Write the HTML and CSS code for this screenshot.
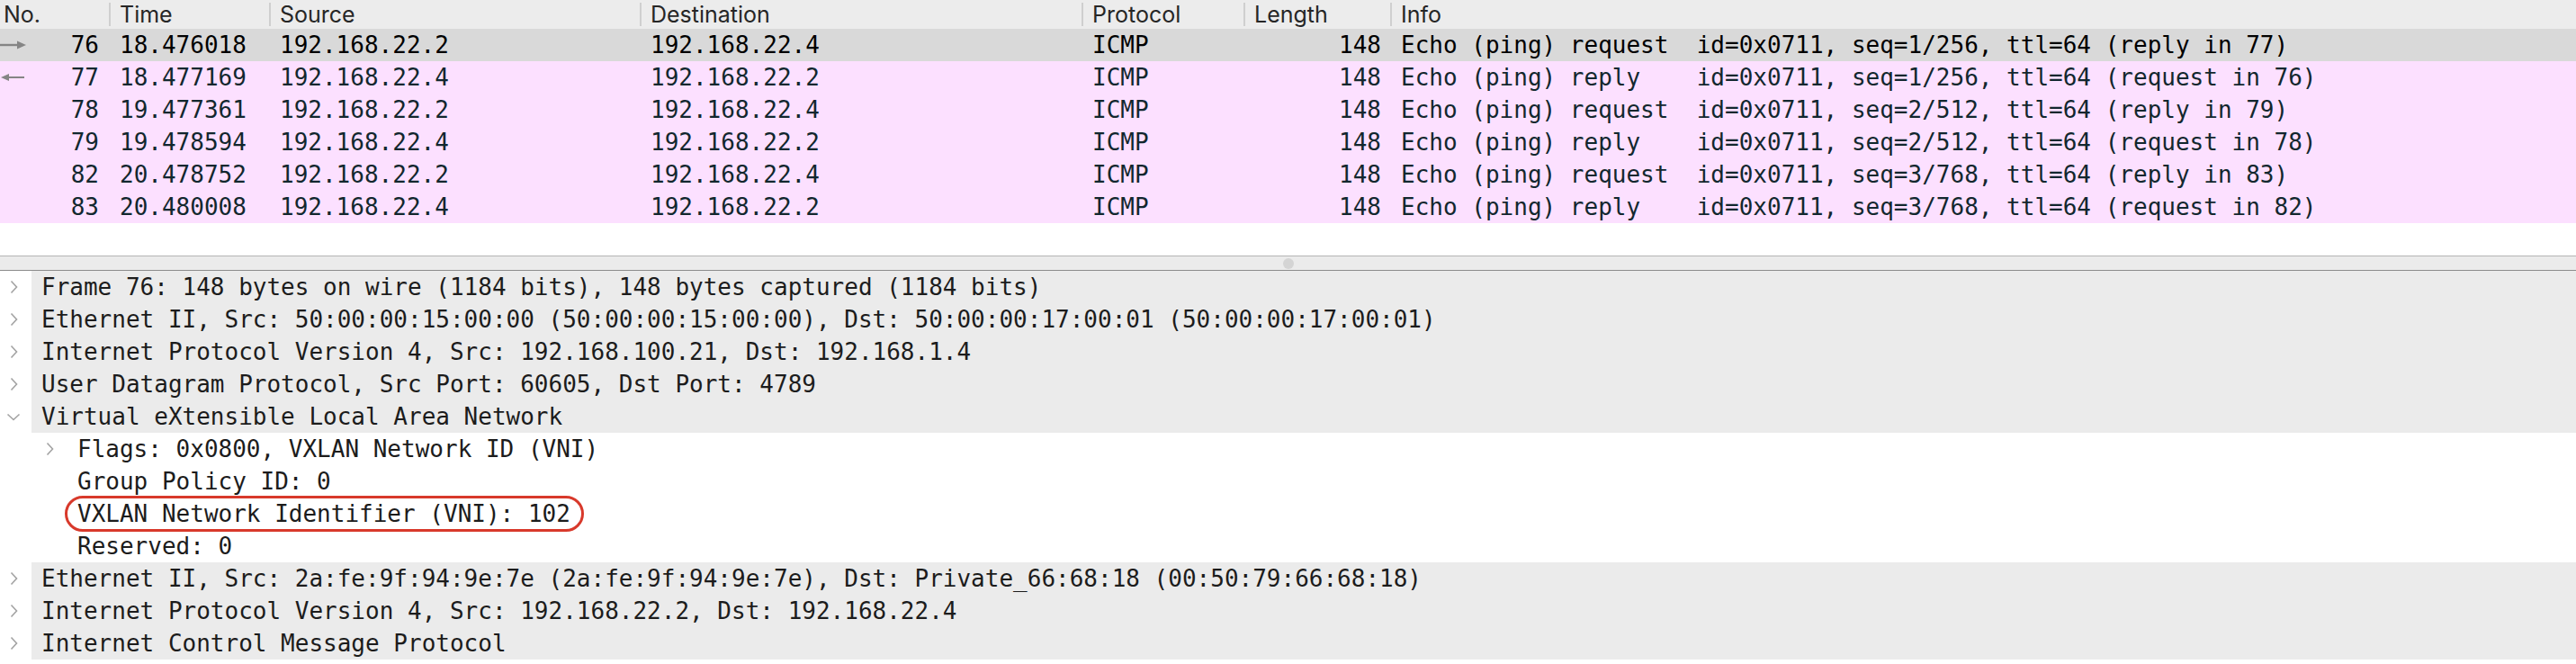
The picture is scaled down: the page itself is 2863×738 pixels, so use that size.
FILE: index.html
```html
<!DOCTYPE html>
<html>
<head>
<meta charset="utf-8">
<link rel="stylesheet" href="styles.css">
</head>
<body>
<div class="app">
  <div class="plist">
    <div class="phead">
      <div class="h">No.</div>
      <div class="h sep">Time</div>
      <div class="h sep">Source</div>
      <div class="h sep">Destination</div>
      <div class="h sep">Protocol</div>
      <div class="h sep">Length</div>
      <div class="h sep">Info</div>
    </div>
    <div class="prow sel">
      <div class="c no"><svg class="rel" width="30" height="14" viewBox="0 0 30 14"><line x1="0" y1="7" x2="20" y2="7" stroke="#858585" stroke-width="2.4"/><polygon points="19,2.5 29,7 19,11.5" fill="#858585"/></svg><span>76</span></div>
      <div class="c">18.476018</div><div class="c">192.168.22.2</div><div class="c">192.168.22.4</div><div class="c">ICMP</div><div class="c num">148</div>
      <div class="c">Echo (ping) request  id=0x0711, seq=1/256, ttl=64 (reply in 77)</div>
    </div>
    <div class="prow icmp">
      <div class="c no"><svg class="rel" width="30" height="14" viewBox="0 0 30 14"><line x1="7" y1="7" x2="27" y2="7" stroke="#858585" stroke-width="2"/><polygon points="1,7 10,3 10,11" fill="#858585"/></svg><span>77</span></div>
      <div class="c">18.477169</div><div class="c">192.168.22.4</div><div class="c">192.168.22.2</div><div class="c">ICMP</div><div class="c num">148</div>
      <div class="c">Echo (ping) reply    id=0x0711, seq=1/256, ttl=64 (request in 76)</div>
    </div>
    <div class="prow icmp">
      <div class="c no"><span>78</span></div>
      <div class="c">19.477361</div><div class="c">192.168.22.2</div><div class="c">192.168.22.4</div><div class="c">ICMP</div><div class="c num">148</div>
      <div class="c">Echo (ping) request  id=0x0711, seq=2/512, ttl=64 (reply in 79)</div>
    </div>
    <div class="prow icmp">
      <div class="c no"><span>79</span></div>
      <div class="c">19.478594</div><div class="c">192.168.22.4</div><div class="c">192.168.22.2</div><div class="c">ICMP</div><div class="c num">148</div>
      <div class="c">Echo (ping) reply    id=0x0711, seq=2/512, ttl=64 (request in 78)</div>
    </div>
    <div class="prow icmp">
      <div class="c no"><span>82</span></div>
      <div class="c">20.478752</div><div class="c">192.168.22.2</div><div class="c">192.168.22.4</div><div class="c">ICMP</div><div class="c num">148</div>
      <div class="c">Echo (ping) request  id=0x0711, seq=3/768, ttl=64 (reply in 83)</div>
    </div>
    <div class="prow icmp">
      <div class="c no"><span>83</span></div>
      <div class="c">20.480008</div><div class="c">192.168.22.4</div><div class="c">192.168.22.2</div><div class="c">ICMP</div><div class="c num">148</div>
      <div class="c">Echo (ping) reply    id=0x0711, seq=3/768, ttl=64 (request in 82)</div>
    </div>
  </div>

  <div class="splitter"><span class="grip"></span></div>

  <div class="tree">
    <div class="trow top"><span class="tw"><svg width="9" height="16" viewBox="0 0 9 16"><polyline points="1.5,1.5 7.5,8 1.5,14.5" fill="none" stroke="#a3a3a3" stroke-width="1.6"/></svg></span><span class="tt">Frame 76: 148 bytes on wire (1184 bits), 148 bytes captured (1184 bits)</span></div>
    <div class="trow top"><span class="tw"><svg width="9" height="16" viewBox="0 0 9 16"><polyline points="1.5,1.5 7.5,8 1.5,14.5" fill="none" stroke="#a3a3a3" stroke-width="1.6"/></svg></span><span class="tt">Ethernet II, Src: 50:00:00:15:00:00 (50:00:00:15:00:00), Dst: 50:00:00:17:00:01 (50:00:00:17:00:01)</span></div>
    <div class="trow top"><span class="tw"><svg width="9" height="16" viewBox="0 0 9 16"><polyline points="1.5,1.5 7.5,8 1.5,14.5" fill="none" stroke="#a3a3a3" stroke-width="1.6"/></svg></span><span class="tt">Internet Protocol Version 4, Src: 192.168.100.21, Dst: 192.168.1.4</span></div>
    <div class="trow top"><span class="tw"><svg width="9" height="16" viewBox="0 0 9 16"><polyline points="1.5,1.5 7.5,8 1.5,14.5" fill="none" stroke="#a3a3a3" stroke-width="1.6"/></svg></span><span class="tt">User Datagram Protocol, Src Port: 60605, Dst Port: 4789</span></div>
    <div class="trow top"><span class="tw"><svg width="16" height="9" viewBox="0 0 16 9"><polyline points="1.5,1.5 8,7.5 14.5,1.5" fill="none" stroke="#a3a3a3" stroke-width="1.6"/></svg></span><span class="tt">Virtual eXtensible Local Area Network</span></div>
    <div class="trow child"><span class="tw"><svg width="9" height="16" viewBox="0 0 9 16"><polyline points="1.5,1.5 7.5,8 1.5,14.5" fill="none" stroke="#a3a3a3" stroke-width="1.6"/></svg></span><span class="tt">Flags: 0x0800, VXLAN Network ID (VNI)</span></div>
    <div class="trow child"><span class="tw"></span><span class="tt">Group Policy ID: 0</span></div>
    <div class="trow child"><span class="tw"></span><span class="tt"><span class="hl">VXLAN Network Identifier (VNI): 102</span></span></div>
    <div class="trow child"><span class="tw"></span><span class="tt">Reserved: 0</span></div>
    <div class="trow top"><span class="tw"><svg width="9" height="16" viewBox="0 0 9 16"><polyline points="1.5,1.5 7.5,8 1.5,14.5" fill="none" stroke="#a3a3a3" stroke-width="1.6"/></svg></span><span class="tt">Ethernet II, Src: 2a:fe:9f:94:9e:7e (2a:fe:9f:94:9e:7e), Dst: Private_66:68:18 (00:50:79:66:68:18)</span></div>
    <div class="trow top"><span class="tw"><svg width="9" height="16" viewBox="0 0 9 16"><polyline points="1.5,1.5 7.5,8 1.5,14.5" fill="none" stroke="#a3a3a3" stroke-width="1.6"/></svg></span><span class="tt">Internet Protocol Version 4, Src: 192.168.22.2, Dst: 192.168.22.4</span></div>
    <div class="trow top"><span class="tw"><svg width="9" height="16" viewBox="0 0 9 16"><polyline points="1.5,1.5 7.5,8 1.5,14.5" fill="none" stroke="#a3a3a3" stroke-width="1.6"/></svg></span><span class="tt">Internet Control Message Protocol</span></div>
  </div>
</div>
</body>
</html>
```

FILE: styles.css
```css
html, body {
  margin: 0;
  padding: 0;
  background: #ffffff;
}
.app {
  width: 2863px;
  height: 738px;
  overflow: hidden;
  font-family: "DejaVu Sans Mono", "Liberation Mono", monospace;
  font-size: 26px;
}
.plist {
  height: 284px;
  background: #ffffff;
}
.phead, .prow {
  display: grid;
  grid-template-columns: 122px 178px 412px 491px 180px 163px 1fr;
}
.phead {
  height: 32px;
  background: #ececec;
  align-items: center;
  font-family: "Inter", "Liberation Sans", sans-serif;
  font-size: 25px;
  color: #262626;
}
.h {
  height: 26px;
  line-height: 26px;
  padding-left: 10px;
  margin-left: -1px;
  border-left: 2px solid #cfcfcf;
  white-space: nowrap;
}
.h:first-child {
  padding-left: 2px;
  margin-left: 0;
  border-left-color: transparent;
}
.prow {
  height: 36px;
  line-height: 36px;
  white-space: pre;
}
.prow.sel {
  background: #d9d9d9;
  color: #000000;
}
.prow.icmp {
  background: #fce0ff;
  color: #12272e;
}
.c {
  padding: 0 11px;
  overflow: hidden;
}
.c.no {
  display: flex;
  align-items: center;
  padding: 0 12px 0 0;
}
.c.no span {
  margin-left: auto;
}
.c.num {
  text-align: right;
  padding-right: 11px;
}
.rel {
  display: block;
}
.splitter {
  height: 15px;
  border-top: 1px solid #b4b4b4;
  border-bottom: 1px solid #8c8c8c;
  background: #ebebeb;
  display: flex;
  justify-content: center;
  align-items: center;
}
.grip {
  width: 12px;
  height: 12px;
  border-radius: 50%;
  background: #d4d4d4;
}
.tree {
  color: #1c1c1c;
}
.trow {
  display: flex;
  height: 36px;
  line-height: 36px;
  white-space: pre;
}
.tw {
  width: 30px;
  padding-right: 5px;
  display: flex;
  align-items: center;
  justify-content: center;
  flex: none;
}
.tw svg {
  display: block;
}
.tt {
  flex: 1;
  padding-left: 11px;
}
.trow.top .tt {
  background: #ebebeb;
}
.trow.child {
  padding-left: 40px;
}
.hl {
  position: relative;
  display: inline-block;
}
.hl::after {
  content: "";
  position: absolute;
  left: -14px;
  right: -15px;
  top: -2px;
  bottom: -2px;
  border: 3.5px solid #d8392b;
  border-radius: 21px;
}
```
